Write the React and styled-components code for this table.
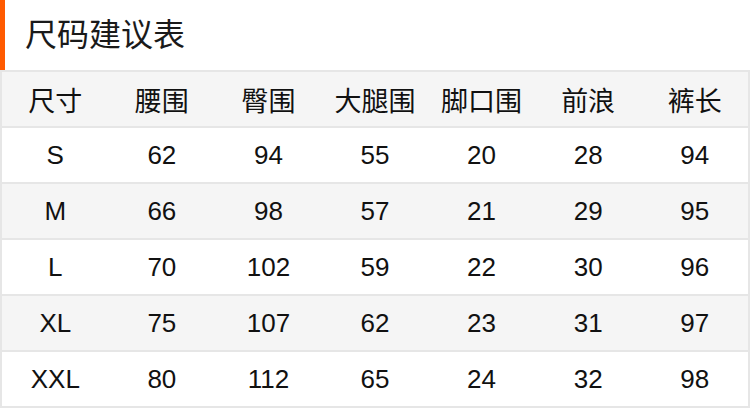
import styled, { createGlobalStyle } from "styled-components"

const GlobalStyle = createGlobalStyle`
    body {
        margin: 0;
        background: #fff;
        font-family: "Liberation Sans", "Noto Sans CJK SC", sans-serif;
    }
`

const Page = styled.div`
    width: 750px;
    height: 408px;
    overflow: hidden;
`

const Title = styled.h1`
    margin: 0;
    height: 70px;
    display: flex;
    align-items: center;
    padding-left: 20px;
    padding-bottom: 6px;
    border-left: 5px solid #ff5a00;
    box-sizing: border-box;
    font-family: "Noto Sans CJK SC", sans-serif;
    font-weight: 400;
    font-size: 32px;
    color: #1a1a1a;
`

const Table = styled.div`
    width: 750px;
    box-sizing: border-box;
    border: 2px solid #e6e6e6;
    border-bottom: none;
`

const Row = styled.div`
    display: grid;
    grid-template-columns: repeat(7, 1fr);
    height: 54px;
    border-bottom: 2px solid #e6e6e6;
    background: ${(p) => (p.$shade ? "#f5f5f5" : "#fff")};
`

const Cell = styled.div`
    display: flex;
    align-items: center;
    justify-content: center;
    color: #111;
    font-family: ${(p) =>
        p.$head ? `"Noto Sans CJK SC", sans-serif` : `"Liberation Sans", sans-serif`};
    font-size: ${(p) => (p.$head ? "27px" : "26px")};
`

const heads = ["尺寸", "腰围", "臀围", "大腿围", "脚口围", "前浪", "裤长"]

const rows = [
    ["S", 62, 94, 55, 20, 28, 94],
    ["M", 66, 98, 57, 21, 29, 95],
    ["L", 70, 102, 59, 22, 30, 96],
    ["XL", 75, 107, 62, 23, 31, 97],
    ["XXL", 80, 112, 65, 24, 32, 98],
]

const App = () => {
    return (
        <Page>
            <GlobalStyle />
            <Title>尺码建议表</Title>
            <Table>
                <Row $shade>
                    {heads.map((h) => (
                        <Cell key={h} $head>{h}</Cell>
                    ))}
                </Row>
                {rows.map((r, i) => (
                    <Row key={r[0]} $shade={i % 2 === 1}>
                        {r.map((v, j) => (
                            <Cell key={j}>{v}</Cell>
                        ))}
                    </Row>
                ))}
            </Table>
        </Page>
    )
}

export default App
